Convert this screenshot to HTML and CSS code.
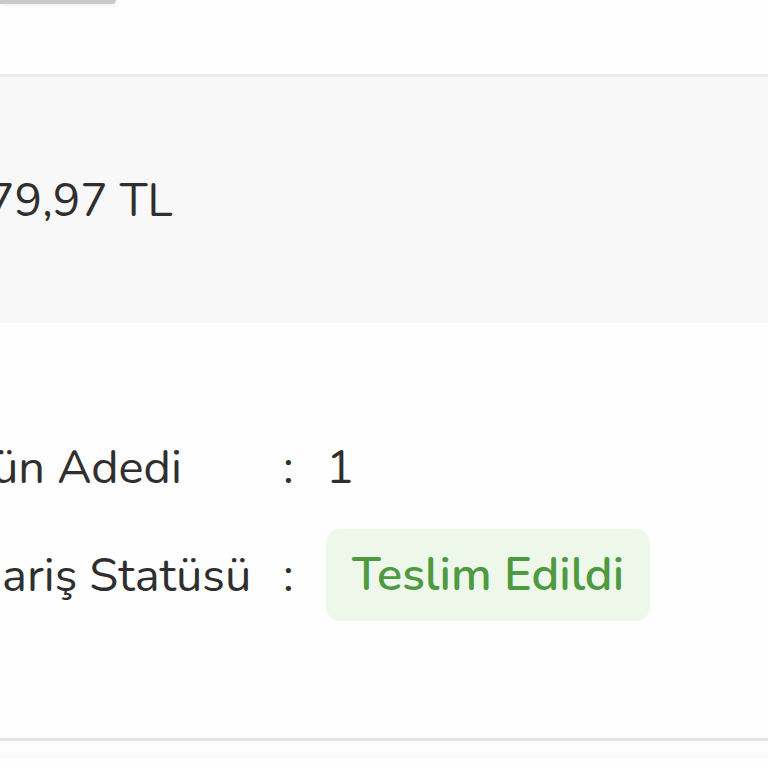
FILE: index.html
```html
<!DOCTYPE html>
<html>
	<head>
		<meta name="viewport" content="width=device-width,initial-scale=1.0">
		<title>Sipariş Detayı</title>
		<link rel="stylesheet" href="styles.css">
	</head>
	<body>
		<div class="top">
			<div class="btn-edge"></div>
		</div>

		<div class="summary">
			<span class="total">79,97 TL</span>
		</div>

		<div class="details">
			<div class="row">
				<span class="label label-count">ün Adedi</span>
				<span class="colon">:</span>
				<span class="value">1</span>
			</div>
			<div class="row">
				<span class="label label-status">ariş Statüsü</span>
				<span class="colon">:</span>
				<span class="badge">Teslim Edildi</span>
			</div>
		</div>

		<div class="footer">
			<div class="footer-line"></div>
		</div>
	</body>
</html>
```

FILE: styles.css
```css
body {
	margin: 0;
	background: #fefefe;
	font-family: "Nunito", "Lato", "Open Sans", sans-serif;
	color: #2f2f2f;
	overflow: hidden;
}

.top {
	height: 74px;
}

.btn-edge {
	width: 116px;
	height: 4px;
	background: #c9c9c9;
	border-bottom-right-radius: 4px;
	box-shadow: 2px 1px 4px rgba(0, 0, 0, 0.08);
}

.summary {
	height: 246px;
	border-top: 3px solid #ebebeb;
	background: #f8f8f8;
	display: flex;
	align-items: center;
}

.total {
	font-size: 46px;
	margin-left: -13px;
}

.details {
	display: flex;
	flex-direction: column;
	gap: 16px;
	padding: 98px 0 117px 0;
}

.row {
	display: grid;
	grid-template-columns: 280px 46px auto;
	align-items: center;
	min-height: 92px;
	font-size: 47px;
}

.label {
	white-space: nowrap;
}

.label-count {
	margin-left: -8px;
}

.label-status {
	margin-left: 2px;
}

.colon {
	padding-left: 3px;
}

.badge {
	justify-self: start;
	background: #eef8ea;
	color: #4e9a40;
	font-weight: 600;
	padding: 0 26px;
	line-height: 92px;
	border-radius: 14px;
}

.footer {
	border-top: 3px solid #e3e3e3;
	height: 40px;
}

.footer-line {
	margin-top: 11px;
	height: 6px;
	background: #fafafa;
}
```
